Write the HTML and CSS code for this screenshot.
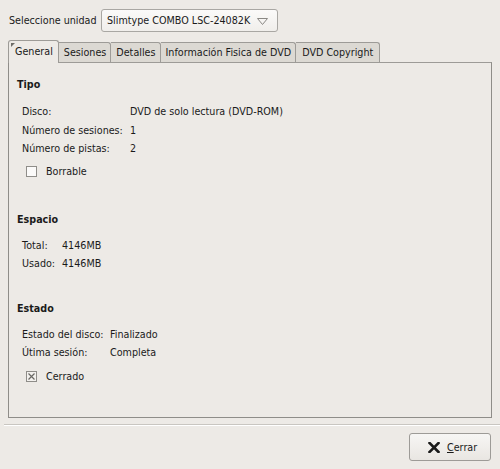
FILE: index.html
```html
<!DOCTYPE html>
<html lang="es">
<head>
<meta charset="utf-8">
<title>Propiedades</title>
<link rel="stylesheet" href="styles.css">
</head>
<body>
<div class="window">
  <div class="unit-row">
    <span class="unit-label">Seleccione unidad</span>
    <div class="combo">
      <span class="combo-text">Slimtype COMBO LSC-24082K</span>
      <svg class="combo-arrow" width="11" height="7" viewBox="0 0 11 7"><path d="M0.5 0.5 H10.5 L5.5 6.5 Z" fill="none" stroke="#8a8884" stroke-width="1"/></svg>
    </div>
  </div>

  <div class="notebook">
    <div class="tabs">
      <div class="tab active"><span class="tab-corner"></span>General</div>
      <div class="tab">Sesiones</div>
      <div class="tab">Detalles</div>
      <div class="tab">Información Fisica de DVD</div>
      <div class="tab tab-last">DVD Copyright</div>
    </div>
    <div class="panel">
      <div class="heading h-tipo">Tipo</div>
      <div class="grid grid-tipo">
        <span>Disco:</span><span>DVD de solo lectura (DVD-ROM)</span>
        <span>Número de sesiones:</span><span>1</span>
        <span>Número de pistas:</span><span>2</span>
      </div>
      <div class="check c-borrable"><span class="box"></span>Borrable</div>

      <div class="heading h-espacio">Espacio</div>
      <div class="grid grid-espacio">
        <span>Total:</span><span>4146MB</span>
        <span>Usado:</span><span>4146MB</span>
      </div>

      <div class="heading h-estado">Estado</div>
      <div class="grid grid-estado">
        <span>Estado del disco:</span><span>Finalizado</span>
        <span>Útima sesión:</span><span>Completa</span>
      </div>
      <div class="check c-cerrado"><span class="box checked"><svg width="7" height="7" viewBox="0 0 7 7"><path d="M0.5 0.5 L6.5 6.5 M6.5 0.5 L0.5 6.5" stroke="#6a6864" stroke-width="1.2"/></svg></span>Cerrado</div>
    </div>
  </div>

  <div class="separator"></div>

  <div class="actions">
    <button class="btn">
      <svg class="btn-icon" width="12" height="11" viewBox="0 0 12 11"><path d="M1.5 1 L10.5 10 M10.5 1 L1.5 10" stroke="#1a1a1a" stroke-width="2.6" stroke-linecap="square"/></svg>
      <span><u>C</u>errar</span>
    </button>
  </div>
</div>
</body>
</html>
```

FILE: styles.css
```css
* { box-sizing: border-box; }
html, body {
  margin: 0;
  padding: 0;
  background: #edeae6;
}
body {
  width: 500px;
  height: 469px;
  overflow: hidden;
  font-family: "DejaVu Sans", "Liberation Sans", sans-serif;
  font-size: 9.6px;
  color: #1a1a1a;
}
.window {
  display: flex;
  flex-direction: column;
}
.unit-row {
  display: flex;
  align-items: center;
  padding: 9px 0 0 9px;
  height: 32px;
}
.unit-label {
  width: 92px;
}
.combo {
  width: 177px;
  height: 23px;
  border: 1px solid #a9a7a3;
  border-radius: 3px;
  background: linear-gradient(#fbfaf9, #f0eeeb);
  display: flex;
  align-items: center;
  padding: 0 0 0 5px;
  gap: 7px;
}
.combo-arrow {
  margin-top: 1px;
}
.notebook {
  margin: 8px 0 0 8px;
  width: 484px;
}
.tabs {
  display: flex;
  align-items: flex-end;
  height: 22px;
  position: relative;
  z-index: 1;
}
.tab {
  height: 20px;
  line-height: 19px;
  padding: 0 4px 0 5px;
  background: #dcd9d3;
  border: 1px solid #9d9b97;
  border-bottom: none;
  border-left: none;
  border-radius: 0 3px 0 0;
}
.tab-last {
  padding: 0 6px 0 6px;
}
.tab.active {
  height: 23px;
  line-height: 22px;
  margin-bottom: -1px;
  padding: 0 5px 0 6px;
  background: #edeae6;
  border-left: 1px solid #9d9b97;
  border-radius: 3px 3px 0 0;
  position: relative;
}
.tab-corner {
  position: absolute;
  left: 2px;
  top: 2px;
  width: 0;
  height: 0;
  border-top: 4px solid #6e6c68;
  border-right: 4px solid transparent;
}
.panel {
  height: 356px;
  border: 1px solid #8f8d89;
  border-top-color: #9d9b97;
  background: #edeae6;
  padding: 13px 0 0 8px;
  display: flex;
  flex-direction: column;
  align-items: flex-start;
}
.heading {
  font-weight: bold;
  line-height: 18px;
}
.grid {
  display: grid;
  line-height: 18.5px;
  margin-left: 5px;
}
.grid-tipo { grid-template-columns: 108px auto; margin-top: 9px; }
.grid-espacio { grid-template-columns: 40px auto; margin-top: 8px; }
.grid-estado { grid-template-columns: 88px auto; margin-top: 8px; }
.check {
  display: flex;
  align-items: center;
  height: 18px;
  line-height: 18px;
  margin-left: 9px;
  gap: 9px;
}
.c-borrable { margin-top: 4px; }
.c-cerrado { margin-top: 5px; }
.box {
  width: 11px;
  height: 11px;
  border: 1px solid #8f8d89;
  background: #fbfaf9;
  display: flex;
  align-items: center;
  justify-content: center;
}
.box.checked { background: #f3f1ee; }
.h-espacio { margin-top: 30px; }
.h-estado { margin-top: 26px; }
.separator {
  margin: 6px 0 0 4px;
  height: 2px;
  border-top: 1px solid #c9c6c1;
  border-bottom: 1px solid #ffffff;
}
.actions {
  display: flex;
  justify-content: flex-end;
  padding: 7px 9px 0 0;
}
.btn {
  width: 82px;
  height: 28px;
  border: 1px solid #9d9b97;
  border-radius: 3px;
  background: linear-gradient(#f7f6f4, #e9e6e2);
  font: inherit;
  color: #1a1a1a;
  display: flex;
  align-items: center;
  justify-content: flex-start;
  padding: 0 0 0 18px;
  gap: 7px;
}
.btn-icon { margin-top: 0; }
```
